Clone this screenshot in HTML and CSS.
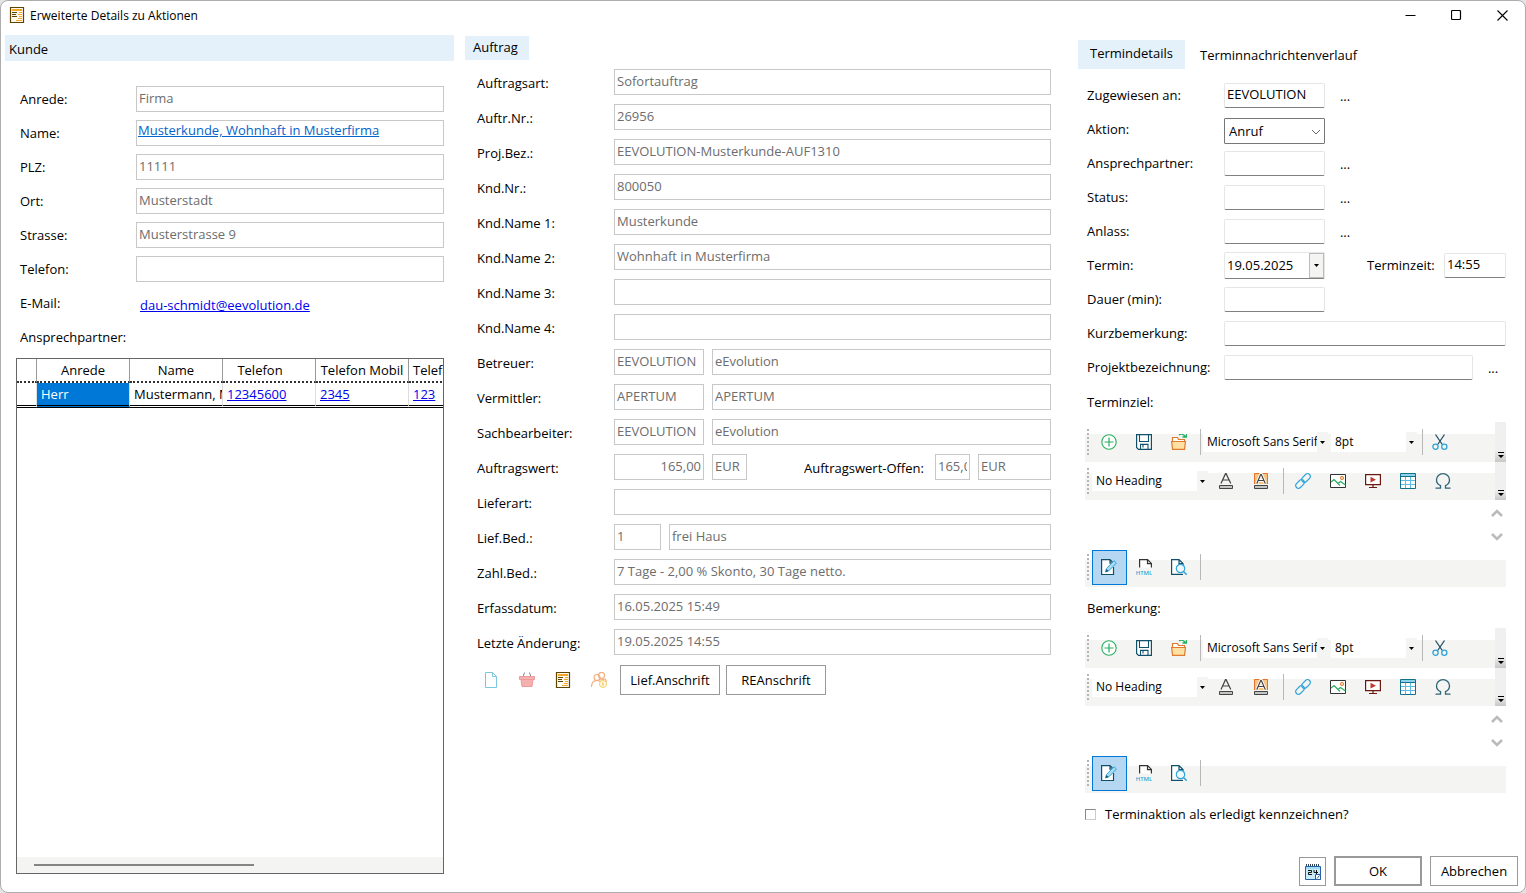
FILE: index.html
```html
<!DOCTYPE html>
<html lang="de">
<head>
<meta charset="utf-8">
<title>Erweiterte Details zu Aktionen</title>
<link rel="stylesheet" href="styles.css">
</head>
<body>
<svg class="sprite" aria-hidden="true">
  <symbol id="i-form" viewBox="0 0 16 16"><path d="M1.5.5h13v15h-13z" fill="#fffaf0" stroke="#5f4300" stroke-width="1.2"/><path d="M3 2h10v2H3z" fill="#f5a623"/><path d="M3 5.500h5M3 7.500h4M3 9.500h5" stroke="#5f4300"/><path d="M10 5.500h3M9 7.500h4M10 9.500h3M9 11.500h4M7 13.500h6" stroke="#f5a623"/></symbol>
  <symbol id="i-page" viewBox="0 0 16 16"><path d="M2.500.5h7l4 4v11h-11z M9.500.5v4h4" fill="none" stroke="#7cc6df"/></symbol>
  <symbol id="i-basket" viewBox="0 0 16 16"><path d="M4 5l1.500-4.500M12 5l-1.500-4.500" stroke="#888" fill="none"/><path d="M.5 4.500h15v3H.5z M2 7.500h12l-1 7H3z" fill="#f5b0b0" stroke="#ee9a9a"/></symbol>
  <symbol id="i-users" viewBox="0 0 16 16"><g fill="none" stroke="#f3ae7c" stroke-width="1.100"><circle cx="10.500" cy="3.500" r="3"/><circle cx="6" cy="5.500" r="3"/><path d="M.5 15c0-4 2-6.500 5.500-6.500 1.500 0 2.500.5 3 1M9 8l5-1c1 1 1.500 2 1.500 3"/></g><circle cx="12" cy="12" r="3.500" fill="#fffbe8" stroke="#f2cc6b"/><path d="M11 11h1v3" stroke="#f0b84a" fill="none"/></symbol>
  <symbol id="i-add" viewBox="0 0 16 16"><circle cx="8" cy="8" r="7.200" fill="#fff" stroke="#27ae60" stroke-width="1.100"/><path d="M8 3.500v9M3.500 8h9" stroke="#27ae60" stroke-width="1.200"/></symbol>
  <symbol id="i-save" viewBox="0 0 16 16"><path d="M.6.6h14.800v14.800H2.500L.6 13.500z" fill="#fff" stroke="#12506a" stroke-width="1.200"/><path d="M3.500.6v6.900h9V.6M4.500 15.400v-5h7.500v5M7 10.500v3" fill="none" stroke="#12506a" stroke-width="1.100"/></symbol>
  <symbol id="i-open" viewBox="0 0 16 16"><path d="M1.500 8V3.500h5l1 2h6V8" fill="#fff" stroke="#e07b2e" stroke-width="1.200"/><path d="M.6 7.500h13.900l-1 7.900H1.600z" fill="#ffe0a3" stroke="#e07b2e" stroke-width="1.200"/><path d="M8 1c2-1.500 4-1 6.500 1.500M15.500-1v4h-4" fill="none" stroke="#27ae60" stroke-width="1.300"/></symbol>
  <symbol id="i-cut" viewBox="0 0 16 16"><path d="M3.500.5l6.800 10M12.500.5L5.700 10.500" stroke="#1d5266" stroke-width="1.300" fill="none"/><circle cx="3.500" cy="12.700" r="2.600" fill="none" stroke="#2fa4d8" stroke-width="1.300"/><circle cx="12.300" cy="12.700" r="2.600" fill="none" stroke="#2fa4d8" stroke-width="1.300"/></symbol>
  <symbol id="i-color" viewBox="0 0 16 16"><path d="M3 10.500L7.500.7h.6l4.700 9.800M4.700 7h6.400" fill="none" stroke="#444" stroke-width="1.200"/><path d="M1.500 12.500h13v3h-13z" fill="#c4c6c4" stroke="#444"/></symbol>
  <symbol id="i-mark" viewBox="0 0 16 16"><path d="M1 0h14v11H1z" fill="#f9c583"/><path d="M1.500 11V.5h13V11" fill="none" stroke="#e8702a"/><path d="M3.800 10.500L7.700 1.500h.6l4 9M5.300 7.500h5.400" fill="none" stroke="#fff" stroke-width="3"/><path d="M3.800 10.500L7.700 1.500h.6l4 9M5.300 7.500h5.400" fill="none" stroke="#444" stroke-width="1.200"/><path d="M1.500 12.500h13v3h-13z" fill="#c4c6c4" stroke="#444"/></symbol>
  <symbol id="i-link" viewBox="0 0 16 16"><g fill="none" stroke="#2fa4d8" stroke-width="1.200"><rect x="-5" y="-2.800" width="10" height="5.600" rx="2.800" transform="translate(11 5) rotate(-45)"/><rect x="-5" y="-2.800" width="10" height="5.600" rx="2.800" transform="translate(5 11) rotate(-45)"/></g></symbol>
  <symbol id="i-image" viewBox="0 0 16 16"><path d="M.5 1.500h15v13H.5z" fill="#fff" stroke="#333"/><circle cx="12" cy="5" r="1.600" fill="#ffe0b0" stroke="#e8803a"/><path d="M1 9l3-2.500 6 6M8 10.500l2.500-2 5 3.500" fill="none" stroke="#27ae60" stroke-width="1.200"/></symbol>
  <symbol id="i-video" viewBox="0 0 16 16"><path d="M.6 1.600h14.800v10H.6z" fill="#fff" stroke="#6b1a12" stroke-width="1.200"/><path d="M5.500 3.800L11 6.700l-5.500 2.800z" fill="#c0392b"/><path d="M8 11.500v3M4 14.500h8" stroke="#6b1a12" stroke-width="1.200"/></symbol>
  <symbol id="i-table" viewBox="0 0 16 16"><path d="M.5.5h15v15H.5z" fill="#fff" stroke="#12708a"/><path d="M1 1h14v2H1z" fill="#8fd3ea"/><path d="M5.500 4v11M10.500 4v11M1 7.500h14M1 11.500h14" stroke="#5dbbe0"/><path d="M.5 3.500h15" stroke="#12708a"/></symbol>
  <symbol id="i-omega" viewBox="0 0 16 16"><path d="M.5 15.200h5v-2.500C3 11.500 1.500 9.500 1.500 7c0-3.700 2.800-6.300 6.500-6.300s6.500 2.600 6.500 6.300c0 2.500-1.500 4.500-4 5.700v2.500h5" fill="none" stroke="#2d6478" stroke-width="1.300"/></symbol>
  <symbol id="i-edit" viewBox="0 0 16 16"><path d="M12.500 8v7.500H.6V.6H9l3 3M9 .6v3.500h3" fill="#fff" stroke="#12506a" stroke-width="1.200"/><path d="M4.500 13l1-3.500 7.500-7.800 2.400 2.300-7.500 7.800z" fill="#a9dcf2" stroke="#2fa4d8"/><path d="M4.500 13l1-3 2 1.900z" fill="#12506a"/></symbol>
  <symbol id="i-html" viewBox="0 0 16 16"><path d="M3.600 8.500V.6h8l3.800 3.800v4.100M11.500.6v4h4" fill="#fff" stroke="#333" stroke-width="1.200"/><text x="8" y="16" class="html-mark">HTML</text></symbol>
  <symbol id="i-preview" viewBox="0 0 16 16"><path d="M12 15.400H.6V.6H8l4 4V6M8 .6v4h4" fill="#fff" stroke="#12506a" stroke-width="1.200"/><circle cx="9.500" cy="9.500" r="4.200" fill="#eef9ff" stroke="#2fa4d8" stroke-width="1.200"/><path d="M12.500 12.500l3.200 3.200" stroke="#2fa4d8" stroke-width="1.500"/></symbol>
  <symbol id="i-cal" viewBox="0 0 16 16"><path d="M.5 2.500h15v13H.5z" fill="#c9ecfb" stroke="#2b5fa5"/><path d="M1 3h14v2H1z" fill="#9bdcf7"/><path d="M1 0h1v2H1zM3 0h1v2H3zM5 0h1v2H5zM7 0h1v2H7zM9 0h1v2H9zM11 0h1v2h-1zM13 0h1v2h-1z" fill="#345"/><path d="M3 6.500h3.500v2h-3v2H7M9 6v2.500h4M11.500 6v5" fill="none" stroke="#111"/><path d="M10.500 10.500h5v5h-5z" fill="#fff" stroke="#2b5fa5"/><path d="M12 14.500l2.500-3" stroke="#2b5fa5"/></symbol>
  <symbol id="i-down" viewBox="0 0 5 3"><path d="M0 0h5L2.500 3z" fill="#000"/></symbol>
  <symbol id="i-chevron" viewBox="0 0 10 6"><path d="M1 1l4 4 4-4" fill="none" stroke="#666"/></symbol>
  <symbol id="i-more" viewBox="0 0 6 6"><path d="M0 0h6v1H0zM0 3h6L3 6z" fill="#000"/></symbol>
  <symbol id="i-up-big" viewBox="0 0 12 8"><path d="M1 7l5-5 5 5" fill="none" stroke="#bbb" stroke-width="2.600"/></symbol>
  <symbol id="i-down-big" viewBox="0 0 12 8"><path d="M1 1l5 5 5-5" fill="none" stroke="#bbb" stroke-width="2.600"/></symbol>
</svg>

<div class="window">
  <header class="titlebar">
    <svg class="icon"><use href="#i-form"/></svg>
    <h1 class="title">Erweiterte Details zu Aktionen</h1>
    <div class="window-buttons">
      <button class="window-button" aria-label="Minimieren"><svg viewBox="0 0 11 11"><path d="M.5 5.500h10" stroke="#000"/></svg></button>
      <button class="window-button" aria-label="Maximieren"><svg viewBox="0 0 11 11"><rect x=".5" y=".5" width="9" height="9" rx="1" fill="none" stroke="#000" stroke-width="1.200"/></svg></button>
      <button class="window-button" aria-label="Schließen"><svg viewBox="0 0 11 11"><path d="M.5.5l10 10M10.500.5l-10 10" stroke="#000" stroke-width="1.100"/></svg></button>
    </div>
  </header>

  <main class="columns">
    <section class="customer">
      <h2 class="section-title">Kunde</h2>
      <div class="customer-form">
        <div class="row"><label for="k1">Anrede:</label><input class="field" id="k1" readonly value="Firma"></div>
        <div class="row"><span class="label">Name:</span><div class="field"><a class="name-link" href="#">Musterkunde, Wohnhaft in Musterfirma</a></div></div>
        <div class="row"><label for="k3">PLZ:</label><input class="field" id="k3" readonly value="11111"></div>
        <div class="row"><label for="k4">Ort:</label><input class="field" id="k4" readonly value="Musterstadt"></div>
        <div class="row"><label for="k5">Strasse:</label><input class="field" id="k5" readonly value="Musterstrasse 9"></div>
        <div class="row"><label for="k6">Telefon:</label><input class="field" id="k6" readonly></div>
        <div class="row"><span class="label">E-Mail:</span><a class="mail-link" href="#">dau-schmidt@eevolution.de</a></div>
        <div class="row"><span class="label">Ansprechpartner:</span></div>
      </div>
      <div class="contacts">
        <div class="contacts-view">
          <table class="contacts-table">
            <colgroup><col class="col-marker"><col><col><col><col><col></colgroup>
            <thead><tr><th></th><th>Anrede</th><th>Name</th><th class="shifted">Telefon</th><th>Telefon Mobil</th><th class="start">Telefon</th></tr></thead>
            <tbody><tr><td></td><td class="selected">Herr</td><td>Mustermann, M</td><td><a href="#">12345600</a></td><td><a href="#">2345</a></td><td><a href="#">123</a></td></tr></tbody>
          </table>
        </div>
        <div class="scrollbar"><div class="thumb"></div></div>
      </div>
    </section>

    <section class="order">
      <button class="tab active order-tab">Auftrag</button>
      <div class="order-form">
        <div class="row"><label for="a1">Auftragsart:</label><input class="field" id="a1" readonly value="Sofortauftrag"></div>
        <div class="row"><label for="a2">Auftr.Nr.:</label><input class="field" id="a2" readonly value="26956"></div>
        <div class="row"><label for="a3">Proj.Bez.:</label><input class="field" id="a3" readonly value="EEVOLUTION-Musterkunde-AUF1310"></div>
        <div class="row"><label for="a4">Knd.Nr.:</label><input class="field" id="a4" readonly value="800050"></div>
        <div class="row"><label for="a5">Knd.Name 1:</label><input class="field" id="a5" readonly value="Musterkunde"></div>
        <div class="row"><label for="a6">Knd.Name 2:</label><input class="field" id="a6" readonly value="Wohnhaft in Musterfirma"></div>
        <div class="row"><label for="a7">Knd.Name 3:</label><input class="field" id="a7" readonly></div>
        <div class="row"><label for="a8">Knd.Name 4:</label><input class="field" id="a8" readonly></div>
        <div class="row"><label for="a9">Betreuer:</label><input class="field code" id="a9" readonly value="EEVOLUTION"><input class="field" aria-label="Betreuer Name" readonly value="eEvolution"></div>
        <div class="row"><label for="a10">Vermittler:</label><input class="field code" id="a10" readonly value="APERTUM"><input class="field" aria-label="Vermittler Name" readonly value="APERTUM"></div>
        <div class="row"><label for="a11">Sachbearbeiter:</label><input class="field code" id="a11" readonly value="EEVOLUTION"><input class="field" aria-label="Sachbearbeiter Name" readonly value="eEvolution"></div>
        <div class="row"><label for="a12">Auftragswert:</label><input class="field code amount" id="a12" readonly value="165,00"><input class="field unit" aria-label="Währung" readonly value="EUR"><label class="open-label" for="a12b">Auftragswert-Offen:</label><input class="field unit" id="a12b" readonly value="165,00"><input class="field currency" aria-label="Währung offen" readonly value="EUR"></div>
        <div class="row"><label for="a13">Lieferart:</label><input class="field" id="a13" readonly></div>
        <div class="row"><label for="a14">Lief.Bed.:</label><input class="field term" id="a14" readonly value="1"><input class="field" aria-label="Lieferbedingung Text" readonly value="frei Haus"></div>
        <div class="row"><label for="a15">Zahl.Bed.:</label><input class="field" id="a15" readonly value="7 Tage - 2,00 % Skonto, 30 Tage netto."></div>
        <div class="row"><label for="a16">Erfassdatum:</label><input class="field" id="a16" readonly value="16.05.2025 15:49"></div>
        <div class="row"><label for="a17">Letzte Änderung:</label><input class="field" id="a17" readonly value="19.05.2025 14:55"></div>
      </div>
      <div class="order-actions">
        <button class="icon-button" aria-label="Dokument"><svg class="icon"><use href="#i-page"/></svg></button>
        <button class="icon-button" aria-label="Warenkorb"><svg class="icon"><use href="#i-basket"/></svg></button>
        <button class="icon-button" aria-label="Details"><svg class="icon"><use href="#i-form"/></svg></button>
        <button class="icon-button" aria-label="Kontakte"><svg class="icon"><use href="#i-users"/></svg></button>
        <button class="button address">Lief.Anschrift</button>
        <button class="button address">REAnschrift</button>
      </div>
    </section>

    <section class="appointment">
      <nav class="tabs">
        <button class="tab active">Termindetails</button>
        <button class="tab">Terminnachrichtenverlauf</button>
      </nav>
      <div class="appointment-form">
        <div class="row"><label for="t1">Zugewiesen an:</label><input class="entry short" id="t1" value="EEVOLUTION"><button class="dots" aria-label="Zugewiesen auswählen">...</button></div>
        <div class="row"><label for="t2">Aktion:</label><div class="combo"><select id="t2"><option>Anruf</option></select><svg class="chevron"><use href="#i-chevron"/></svg></div></div>
        <div class="row"><label for="t3">Ansprechpartner:</label><input class="entry short" id="t3"><button class="dots" aria-label="Ansprechpartner auswählen">...</button></div>
        <div class="row"><label for="t4">Status:</label><input class="entry short" id="t4"><button class="dots" aria-label="Status auswählen">...</button></div>
        <div class="row"><label for="t5">Anlass:</label><input class="entry short" id="t5"><button class="dots" aria-label="Anlass auswählen">...</button></div>
        <div class="row"><label for="t6">Termin:</label><div class="entry short date"><input id="t6" value="19.05.2025"><button class="date-button" aria-label="Kalender"><svg class="arrow"><use href="#i-down"/></svg></button></div><label class="time-label" for="t6b">Terminzeit:</label><input class="entry time" id="t6b" value="14:55"></div>
        <div class="row"><label for="t7">Dauer (min):</label><input class="entry short" id="t7"></div>
        <div class="row"><label for="t8">Kurzbemerkung:</label><input class="entry" id="t8"></div>
        <div class="row"><label for="t9">Projektbezeichnung:</label><input class="entry" id="t9"><button class="dots" aria-label="Projekt auswählen">...</button></div>
      </div>

      <label class="editor-label" for="e1">Terminziel:</label>
      <div class="editor">
        <div class="toolbar">
          <span class="grip"></span>
          <button class="tool" aria-label="Neu"><svg class="icon"><use href="#i-add"/></svg></button>
          <button class="tool" aria-label="Speichern"><svg class="icon"><use href="#i-save"/></svg></button>
          <button class="tool" aria-label="Öffnen"><svg class="icon"><use href="#i-open"/></svg></button>
          <span class="divider"></span>
          <div class="picker font"><select aria-label="Schriftart"><option>Microsoft Sans Serif</option></select><svg class="arrow"><use href="#i-down"/></svg></div>
          <div class="picker size"><select aria-label="Schriftgröße"><option>8pt</option></select><svg class="arrow"><use href="#i-down"/></svg></div>
          <span class="divider"></span>
          <button class="tool" aria-label="Ausschneiden"><svg class="icon"><use href="#i-cut"/></svg></button>
          <button class="overflow" aria-label="Weitere Werkzeuge"><svg class="more"><use href="#i-more"/></svg></button>
        </div>
        <div class="toolbar second">
          <span class="grip"></span>
          <div class="picker heading"><select aria-label="Überschrift"><option>No Heading</option></select><svg class="arrow"><use href="#i-down"/></svg></div>
          <button class="tool" aria-label="Textfarbe"><svg class="icon"><use href="#i-color"/></svg></button>
          <button class="tool" aria-label="Hervorheben"><svg class="icon"><use href="#i-mark"/></svg></button>
          <span class="divider"></span>
          <button class="tool" aria-label="Link"><svg class="icon"><use href="#i-link"/></svg></button>
          <button class="tool" aria-label="Bild"><svg class="icon"><use href="#i-image"/></svg></button>
          <button class="tool" aria-label="Video"><svg class="icon"><use href="#i-video"/></svg></button>
          <button class="tool" aria-label="Tabelle"><svg class="icon"><use href="#i-table"/></svg></button>
          <button class="tool" aria-label="Sonderzeichen"><svg class="icon"><use href="#i-omega"/></svg></button>
          <button class="overflow" aria-label="Weitere Werkzeuge"><svg class="more"><use href="#i-more"/></svg></button>
        </div>
        <div class="editor-body">
          <textarea id="e1"></textarea>
          <div class="scroll-arrows"><svg class="big-arrow"><use href="#i-up-big"/></svg><svg class="big-arrow"><use href="#i-down-big"/></svg></div>
        </div>
        <div class="toolbar modes">
          <span class="grip"></span>
          <button class="tool pressed" aria-label="Bearbeiten"><svg class="icon"><use href="#i-edit"/></svg></button>
          <button class="tool" aria-label="HTML-Ansicht"><svg class="icon"><use href="#i-html"/></svg></button>
          <button class="tool" aria-label="Vorschau"><svg class="icon"><use href="#i-preview"/></svg></button>
          <span class="divider"></span>
        </div>
      </div>

      <label class="editor-label" for="e2">Bemerkung:</label>
      <div class="editor">
        <div class="toolbar">
          <span class="grip"></span>
          <button class="tool" aria-label="Neu"><svg class="icon"><use href="#i-add"/></svg></button>
          <button class="tool" aria-label="Speichern"><svg class="icon"><use href="#i-save"/></svg></button>
          <button class="tool" aria-label="Öffnen"><svg class="icon"><use href="#i-open"/></svg></button>
          <span class="divider"></span>
          <div class="picker font"><select aria-label="Schriftart"><option>Microsoft Sans Serif</option></select><svg class="arrow"><use href="#i-down"/></svg></div>
          <div class="picker size"><select aria-label="Schriftgröße"><option>8pt</option></select><svg class="arrow"><use href="#i-down"/></svg></div>
          <span class="divider"></span>
          <button class="tool" aria-label="Ausschneiden"><svg class="icon"><use href="#i-cut"/></svg></button>
          <button class="overflow" aria-label="Weitere Werkzeuge"><svg class="more"><use href="#i-more"/></svg></button>
        </div>
        <div class="toolbar second">
          <span class="grip"></span>
          <div class="picker heading"><select aria-label="Überschrift"><option>No Heading</option></select><svg class="arrow"><use href="#i-down"/></svg></div>
          <button class="tool" aria-label="Textfarbe"><svg class="icon"><use href="#i-color"/></svg></button>
          <button class="tool" aria-label="Hervorheben"><svg class="icon"><use href="#i-mark"/></svg></button>
          <span class="divider"></span>
          <button class="tool" aria-label="Link"><svg class="icon"><use href="#i-link"/></svg></button>
          <button class="tool" aria-label="Bild"><svg class="icon"><use href="#i-image"/></svg></button>
          <button class="tool" aria-label="Video"><svg class="icon"><use href="#i-video"/></svg></button>
          <button class="tool" aria-label="Tabelle"><svg class="icon"><use href="#i-table"/></svg></button>
          <button class="tool" aria-label="Sonderzeichen"><svg class="icon"><use href="#i-omega"/></svg></button>
          <button class="overflow" aria-label="Weitere Werkzeuge"><svg class="more"><use href="#i-more"/></svg></button>
        </div>
        <div class="editor-body">
          <textarea id="e2"></textarea>
          <div class="scroll-arrows"><svg class="big-arrow"><use href="#i-up-big"/></svg><svg class="big-arrow"><use href="#i-down-big"/></svg></div>
        </div>
        <div class="toolbar modes">
          <span class="grip"></span>
          <button class="tool pressed" aria-label="Bearbeiten"><svg class="icon"><use href="#i-edit"/></svg></button>
          <button class="tool" aria-label="HTML-Ansicht"><svg class="icon"><use href="#i-html"/></svg></button>
          <button class="tool" aria-label="Vorschau"><svg class="icon"><use href="#i-preview"/></svg></button>
          <span class="divider"></span>
        </div>
      </div>

      <div class="done"><input type="checkbox" id="done"><label for="done">Terminaktion als erledigt kennzeichnen?</label></div>

      <footer class="actions">
        <button class="button calendar" aria-label="Kalender"><svg class="icon"><use href="#i-cal"/></svg></button>
        <button class="button main default">OK</button>
        <button class="button main">Abbrechen</button>
      </footer>
    </section>
  </main>
</div>
</body>
</html>
```
FILE: styles.css
```css
* { box-sizing: border-box; }
body { margin: 0; background: #e4e4e4; color: #000; font: 13px/18px "Open Sans", "Noto Sans", sans-serif; }
button, input, select, textarea { font: inherit; color: inherit; margin: 0; padding: 0; border: 0; background: none; border-radius: 0; outline: 0; }
h1, h2 { margin: 0; font-weight: 400; }
.sprite { display: none; }
.icon { width: 16px; height: 16px; display: block; flex: none; overflow: visible; }
.window { min-height: 100vh; display: flex; flex-direction: column; background: #fff; border: 1px solid #adadad; border-radius: 8px; }

.titlebar { height: 34px; display: flex; align-items: flex-start; padding: 6px 0 0 8px; }
.title { font-size: 12px; line-height: 18px; margin-left: 5px; flex: 1; }
.window-buttons { display: flex; }
.window-button { width: 46px; height: 16px; display: flex; align-items: center; justify-content: center; }
.window-button svg { width: 11px; height: 11px; }

.columns { flex: 1; display: grid; grid-template-columns: 449fr 597fr 455fr; padding: 0 19px 0 4px; }
.columns > section { min-width: 0; display: flex; flex-direction: column; }
.row { display: flex; align-items: center; }
.row > label, .row > .label { flex: none; white-space: nowrap; }

.field { flex: 1; min-width: 0; width: 0; height: 26px; border: 1px solid #c8c8c8; padding: 0 2px 2px; color: #6d6d6d; background: #fff; }

.customer { padding-bottom: 18px; }
.section-title { background: #e4f1fb; font-size: 13px; line-height: 26px; padding: 1px 4px 0; height: 26px; }
.customer-form { padding: 21px 10px 0 15px; }
.customer-form .row { height: 34px; }
.customer-form label, .customer-form .label { width: 116px; }
.customer-form div.field { padding: 0 1px; }
.name-link { display: block; color: #0563c9; line-height: 18px; white-space: nowrap; overflow: hidden; }
.mail-link { color: #00e; padding: 4px 0 0 4px; }

.contacts { flex: 1; margin: 4px 10px 0 11px; border: 1px solid #666; display: flex; flex-direction: column; min-height: 0; }
.contacts-view { flex: 1; overflow: hidden; }
.contacts-table { table-layout: fixed; border-collapse: separate; border-spacing: 0; width: 485px; }
.col-marker { width: 20px; }
.contacts-table th, .contacts-table td { padding: 0 4px; font-weight: 400; line-height: 20px; white-space: nowrap; overflow: hidden; border-right: 1px solid #999; }
.contacts-table th { height: 24px; border-bottom: 2px dotted #333; }
.contacts-table th.shifted { padding-right: 22px; }
.contacts-table th.start { text-align: left; }
.contacts-table td { height: 25px; border-right-color: #ddd; border-bottom: 3px double #000; }
.contacts-table td.selected { background: #0078d7; color: #fff; }
.contacts-table a { color: #00e; }
.scrollbar { height: 16px; background: #f4f4f2; padding: 7px 17px 0; }
.thumb { width: 56%; height: 2px; background: #858585; }

.order { padding-left: 11px; }
.tab { height: 29px; padding: 0 12px 2px; white-space: nowrap; }
.tab.active { background: #e4f1fb; padding-bottom: 3px; }
.order-tab { align-self: flex-start; height: 24px; margin-top: 1px; width: 64px; padding: 0 8px; text-align: left; }
.order-form { padding: 9px 0 0 12px; display: grid; gap: 9px; }
.order-form .row { gap: 8px; }
.order-form .row > label { width: 129px; padding-top: 2px; }
.order-form .code { flex: none; width: 90px; }
.order-form .unit { flex: none; width: 35px; }
.order-form .term { flex: none; width: 47px; }
.order-form .currency { flex: none; width: 73px; }
.order-form .amount { text-align: right; }
.order-form .row > .open-label { width: auto; margin-left: auto; margin-right: 3px; }
.order-actions { display: flex; align-items: center; padding: 10px 0 0 8px; }
.icon-button { width: 36px; height: 30px; display: flex; align-items: center; justify-content: center; }
.button { height: 30px; border: 1px solid #999; background: #fff; }
.address { width: 100px; margin-left: 3px; }
.address + .address { margin-left: 6px; }

.appointment { padding-left: 27px; }
.tabs { display: flex; padding-top: 5px; }
.tabs .tab.active { width: 107px; }
.tabs .tab + .tab { padding: 0 15px; }
.appointment-form { padding: 9px 0 0 9px; }
.appointment-form .row { height: 34px; }
.appointment-form .row > label { width: 137px; }
.entry { flex: 1; min-width: 0; width: 0; height: 25px; border: 1px solid #e6e6e6; border-bottom-color: #808080; border-radius: 2px; padding: 0 2px 2px; background: #fff; }
.short, .combo { flex: none; width: 101px; }
.dots { width: 16px; height: 18px; margin: 2px 5px 0 12px; }
.combo { height: 26px; margin-top: 3px; border: 1px solid #777; border-radius: 1px; position: relative; }
.combo select { appearance: none; width: 100%; height: 24px; padding: 0 4px; }
.chevron { position: absolute; right: 3px; top: 10px; width: 10px; height: 6px; pointer-events: none; }
.date { display: flex; height: 27px; padding: 0; padding-left: 2px; }
.date input { flex: 1; min-width: 0; width: 0; }
.date-button { width: 15px; background: #f4f4f2; border: 1px solid #bbb; display: flex; align-items: center; justify-content: center; }
.arrow { width: 5px; height: 3px; display: block; }
.appointment-form .row > .time-label { width: 77px; margin-left: auto; }
.entry.time { flex: none; width: 62px; }

.editor-label { padding: 9px 0 0 9px; height: 36px; }
.editor { margin: 0 0 3px 7px; }
.toolbar { height: 42px; display: flex; align-items: center; padding: 2px 0 0 2px; background: linear-gradient(#fff 14px, #f4f4f2 14px); }
.toolbar.second { height: 38px; padding-top: 0; background: linear-gradient(#fff 11px, #f4f4f2 11px); }
.toolbar.modes { height: 39px; padding: 0 0 1px 2px; background: linear-gradient(#fff 12px, #f4f4f2 12px); }
.grip { width: 2px; height: 26px; flex: none; background: repeating-linear-gradient(#b5b5b5 0 2px, transparent 2px 4px); }
.tool { width: 35px; height: 35px; flex: none; display: flex; align-items: center; justify-content: center; padding-right: 1px; }
.grip + .tool { margin-left: 3px; }
.pressed { background: #b5d7f2; border: 1px solid #0078d7; }
.divider { width: 1px; height: 26px; flex: none; background: #b8b8b8; margin-left: 3px; }
.second .divider { margin: 0 2px 0 4px; }
.picker { flex: none; height: 20px; display: flex; align-items: center; background: linear-gradient(to left, #f4f4f2 11px, #fff 11px); padding: 0 3px 0 4px; font-size: 12px; }
.picker select { appearance: none; flex: 1; min-width: 0; height: 18px; }
.picker.font { width: 125px; margin-left: 2px; }
.font select { margin-right: 3px; }
.picker.size { width: 86px; margin-left: 3px; }
.picker.size + .divider { margin-left: 5px; }
.second .picker { margin: 0 1px 0 3px; width: 116px; }
.overflow { align-self: stretch; width: 11px; margin-left: auto; background: linear-gradient(#f0f0f0 28px, #c8c8c8); display: flex; align-items: flex-end; justify-content: center; padding-bottom: 4px; }
.more { width: 6px; height: 6px; }
.editor-body { height: 48px; display: flex; }
.editor-body textarea { flex: 1; resize: none; display: block; }
.scroll-arrows { width: 17px; padding: 9px 3px 7px 2px; display: flex; flex-direction: column; justify-content: space-between; }
.big-arrow { width: 12px; height: 8px; }
.html-mark { font: 600 6px "Open Sans", sans-serif; fill: #3aa5cf; text-anchor: middle; }

.done { display: flex; align-items: center; gap: 9px; padding: 9px 0 0 7px; }
.done input { appearance: none; width: 11px; height: 11px; border: 1px solid #888; border-right-color: #ccc; border-bottom-color: #ccc; }
.actions { display: flex; align-items: flex-end; justify-content: flex-end; gap: 8px; margin: auto -12px 0 0; padding-bottom: 6px; }
.calendar { width: 27px; height: 29px; display: flex; align-items: center; justify-content: center; }
.main { width: 88px; }
.default { border-width: 2px; }
```
